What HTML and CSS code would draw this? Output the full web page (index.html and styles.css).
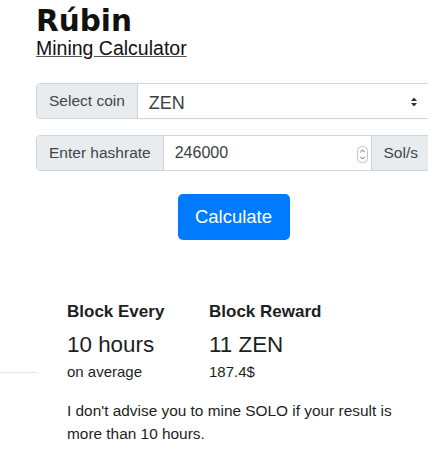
FILE: index.html
```html
<!DOCTYPE html>
<html lang="en">
<head>
<meta charset="utf-8">
<title>Rúbin Mining Calculator</title>
<link rel="stylesheet" href="styles.css">
</head>
<body>
<div class="page">
  <header class="head">
    <h1 class="brand">Rúbin</h1>
    <a class="sub-link" href="#">Mining Calculator</a>
  </header>

  <form class="calc">
    <div class="group">
      <span class="addon">Select coin</span>
      <div class="control select">
        <span class="select-value">ZEN</span>
        <svg class="select-arrows" width="6" height="10" viewBox="0 0 6 10" aria-hidden="true">
          <polygon points="0,4 3,0.4 6,4" fill="#333"/>
          <polygon points="0,6 3,9.6 6,6" fill="#333"/>
        </svg>
      </div>
    </div>

    <div class="group">
      <span class="addon">Enter hashrate</span>
      <div class="control number">
        <span class="number-value">246000</span>
        <svg class="spinner" width="11" height="17" viewBox="0 0 11 17" aria-hidden="true">
          <rect x="0.5" y="0.5" width="10" height="16" rx="4" fill="#fff" stroke="#c4c4c4"/>
          <polyline points="3.3,6.2 5.5,4 7.7,6.2" fill="none" stroke="#666" stroke-width="1"/>
          <polyline points="3.3,10.8 5.5,13 7.7,10.8" fill="none" stroke="#666" stroke-width="1"/>
        </svg>
      </div>
      <span class="addon addon-right">Sol/s</span>
    </div>

    <div class="actions">
      <button type="button" class="btn">Calculate</button>
    </div>
  </form>

  <section class="results-row">
    <div class="side-rule"></div>
    <div class="results">
      <div class="cols">
        <div class="col col-first">
          <div class="label">Block Every</div>
          <div class="value">10 hours</div>
          <div class="note">on average</div>
        </div>
        <div class="col">
          <div class="label">Block Reward</div>
          <div class="value">11 ZEN</div>
          <div class="note">187.4$</div>
        </div>
      </div>
      <p class="advice">I don't advise you to mine SOLO if your result is more than 10 hours.</p>
    </div>
  </section>
</div>
</body>
</html>
```

FILE: styles.css
```css
html, body {
  margin: 0;
  padding: 0;
  overflow: hidden;
  background: #fff;
}

body {
  font-family: "Liberation Sans", Arial, Helvetica, sans-serif;
  color: #1c1f22;
}

.page {
  width: 428px;
  overflow: hidden;
}

.head {
  padding: 5px 0 0 36px;
}

.brand {
  margin: 0;
  font-family: "DejaVu Sans", sans-serif;
  font-weight: bold;
  font-size: 29.5px;
  line-height: 33px;
  color: #111;
}

.sub-link {
  display: inline-block;
  font-size: 19.5px;
  line-height: 21px;
  color: #111;
  text-decoration: underline;
  text-decoration-color: #555;
}

.calc {
  margin: 24px 0 0 36px;
  width: 395px;
}

.group {
  display: flex;
  height: 36px;
  border: 1px solid #ced4da;
  border-radius: 4px;
  box-sizing: border-box;
  overflow: hidden;
}

.group + .group {
  margin-top: 16px;
}

.addon {
  display: flex;
  align-items: center;
  padding: 0 12px;
  background: #e9ecef;
  color: #41464b;
  font-size: 15.5px;
  border-right: 1px solid #ced4da;
  white-space: nowrap;
}

.addon-right {
  border-right: none;
  border-left: 1px solid #ced4da;
}

.control {
  flex: 1;
  display: flex;
  align-items: center;
  background: #fff;
  color: #495057;
}

.select {
  padding: 0 13px 0 11px;
}

.select-value {
  font-size: 18px;
  padding-top: 5px;
  color: #3a3f44;
}

.select-arrows {
  margin-left: auto;
  margin-top: 1px;
}

.number {
  padding: 0 3px 0 11px;
}

.number-value {
  font-size: 16px;
  color: #3a3f44;
}

.spinner {
  margin-left: auto;
  margin-top: 2px;
}

.actions {
  display: flex;
  justify-content: center;
  margin-top: 23px;
}

.btn {
  width: 112px;
  height: 46px;
  padding: 0;
  border: none;
  border-radius: 5px;
  background: #007bff;
  color: #fff;
  font-family: "Liberation Sans", Arial, sans-serif;
  font-size: 18.5px;
  cursor: pointer;
}

.results-row {
  display: flex;
  margin-top: 62px;
}

.side-rule {
  width: 37px;
  height: 1px;
  margin-top: 70px;
  background: #e6e6e6;
  flex: none;
}

.results {
  margin-left: 30px;
  width: 345px;
}

.cols {
  display: flex;
}

.col-first {
  width: 142px;
}

.label {
  font-weight: bold;
  font-size: 17px;
  line-height: 20px;
}

.value {
  margin-top: 10px;
  font-size: 22.4px;
  line-height: 26px;
}

.note {
  margin-top: 4px;
  font-size: 15px;
  line-height: 20px;
}

.advice {
  margin: 18px 0 0;
  font-size: 15.4px;
  line-height: 22.5px;
}
```
